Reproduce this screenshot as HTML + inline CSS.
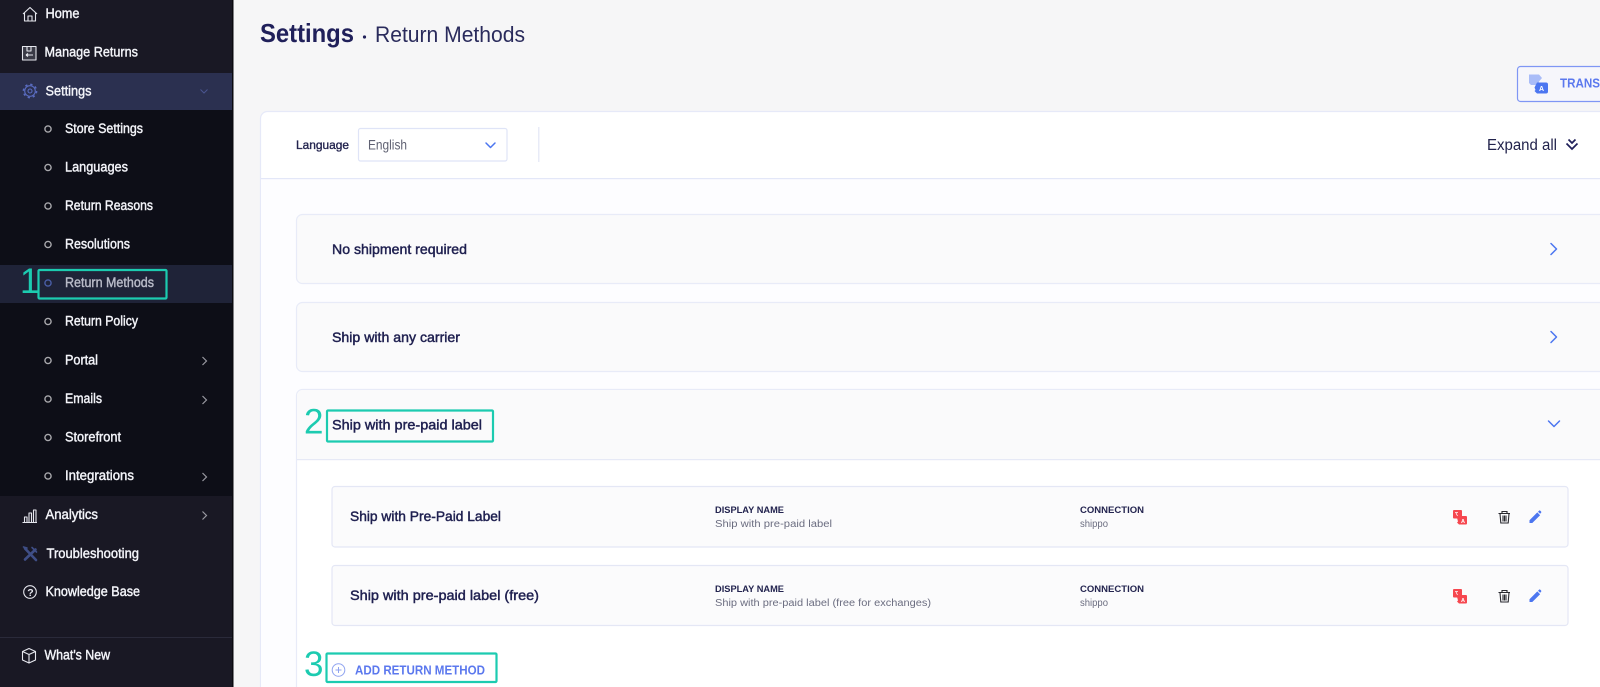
<!DOCTYPE html>
<html lang="en">
<head>
<meta charset="utf-8">
<title>Settings - Return Methods</title>
<style>
html,body{margin:0;padding:0;width:1600px;height:687px;overflow:hidden;background:#f6f6f7}
svg{display:block}
text{font-family:"Liberation Sans",sans-serif}
.n{font-size:13.5px;fill:#f4f5fa;stroke:#f4f5fa;stroke-width:.4}
.t{font-size:14px;fill:#1f2050;stroke:#1f2050;stroke-width:.45}
.l{font-size:9.5px;font-weight:bold;fill:#23244f}
.v{font-size:10px;fill:#6b6d80}
.c{fill:none;stroke:#4c76f0;stroke-width:1.5;stroke-linecap:round;stroke-linejoin:round}
.s{fill:none;stroke:#9a9aa2;stroke-width:1.2}
.b{fill:none;stroke:#a9a9ad;stroke-width:1.4}
.i{fill:none;stroke:#e6e7ee;stroke-width:1.1;stroke-linejoin:round}
.m{fill:none;stroke:#1ccbb0;stroke-width:2.2}
.d{font-size:35px;fill:#1ccbb0}
</style>
</head>
<body>
<svg width="1600" height="687" viewBox="0 0 1600 687" xmlns="http://www.w3.org/2000/svg">
<rect width="1600" height="687" fill="#f6f6f7"/>

<!-- Sidebar -->
<rect x="0" y="0" width="232" height="687" fill="#191824"/>
<rect x="232" y="0" width="1.5" height="687" fill="#0b0b10"/>
<rect x="0" y="110" width="232" height="386" fill="#0d0e17"/>
<rect x="0" y="73" width="232" height="37" fill="#2b3050"/>
<rect x="0" y="265" width="232" height="38" fill="#1f2338"/>
<rect x="0" y="637" width="232" height="1" fill="#2a2a3a"/>

<!-- Sidebar icons -->
<path class="i" d="M23 14 30 7.500 37 14M24.500 13V21H35.500V13M28 21V16H32V21"/>
<rect class="i" x="22.500" y="46.500" width="13.500" height="13.500" style="fill:#3a3a46"/>
<path class="i" d="M27 47V51H31V47M26 55H33M26 55l2-1.500M26 55l2 1.500"/>
<g fill="none" stroke="#5a6cc0">
<circle cx="30" cy="91" r="2" stroke-width="1.100"/>
<circle cx="30" cy="91" r="5.300" stroke-width="1.100"/>
<circle cx="30" cy="91" r="6.600" stroke-width="1.500" stroke-dasharray="2.300 2.880"/>
</g>
<path class="i" d="M22.500 522.500H37M24.500 522V517H27V522M29 522V513H31.500V522M33.500 522V510H36V522"/>
<g fill="none" stroke="#3f4e86" stroke-linecap="round">
<path d="M25 548.500 36 560" stroke-width="2.600"/>
<path d="M35.500 549.500 25 559.500" stroke-width="2.600"/>
<path d="M32 547.500l4.500 4.500M23.500 547l3.500 1" stroke-width="1.600"/>
</g>
<circle class="i" cx="30" cy="592" r="6.300" stroke-width="1.400"/>
<text x="27.300" y="596" font-size="10.500" font-weight="bold" fill="#e6e7ee">?</text>
<path class="i" d="M29 648.500 35.500 651.500V660L29 663 22.500 660V651.500ZM22.500 651.500 29 654.500 35.500 651.500M29 654.500V663"/>

<!-- Sidebar text -->
<text class="n" x="45.500" y="18" textLength="34" lengthAdjust="spacingAndGlyphs">Home</text>
<text class="n" x="44.500" y="56.500" textLength="93.500" lengthAdjust="spacingAndGlyphs">Manage Returns</text>
<text class="n" x="45.500" y="95.500" textLength="46" lengthAdjust="spacingAndGlyphs">Settings</text>
<text class="n" x="65" y="133" textLength="78" lengthAdjust="spacingAndGlyphs">Store Settings</text>
<text class="n" x="65" y="171.500" textLength="63" lengthAdjust="spacingAndGlyphs">Languages</text>
<text class="n" x="65" y="210" textLength="88" lengthAdjust="spacingAndGlyphs">Return Reasons</text>
<text class="n" x="65" y="248.500" textLength="65" lengthAdjust="spacingAndGlyphs">Resolutions</text>
<text class="n" x="65" y="287" textLength="89" lengthAdjust="spacingAndGlyphs" style="fill:#b9bbc8;stroke:#b9bbc8">Return Methods</text>
<text class="n" x="65" y="325.500" textLength="73" lengthAdjust="spacingAndGlyphs">Return Policy</text>
<text class="n" x="65" y="364.500" textLength="33" lengthAdjust="spacingAndGlyphs">Portal</text>
<text class="n" x="65" y="403" textLength="37" lengthAdjust="spacingAndGlyphs">Emails</text>
<text class="n" x="65" y="441.500" textLength="56" lengthAdjust="spacingAndGlyphs">Storefront</text>
<text class="n" x="65" y="480" textLength="69" lengthAdjust="spacingAndGlyphs">Integrations</text>
<text class="n" x="45.500" y="519" textLength="52.500" lengthAdjust="spacingAndGlyphs">Analytics</text>
<text class="n" x="46.500" y="558" textLength="92.500" lengthAdjust="spacingAndGlyphs">Troubleshooting</text>
<text class="n" x="45.500" y="596" textLength="94.500" lengthAdjust="spacingAndGlyphs">Knowledge Base</text>
<text class="n" x="44.500" y="659.500" textLength="65.500" lengthAdjust="spacingAndGlyphs">What's New</text>

<!-- Bullets -->
<circle class="b" cx="48" cy="129" r="3.100"/>
<circle class="b" cx="48" cy="167.500" r="3.100"/>
<circle class="b" cx="48" cy="206" r="3.100"/>
<circle class="b" cx="48" cy="244.500" r="3.100"/>
<circle class="b" cx="48" cy="283" r="3.100" style="stroke:#4a5ea8"/>
<circle class="b" cx="48" cy="321.500" r="3.100"/>
<circle class="b" cx="48" cy="360.500" r="3.100"/>
<circle class="b" cx="48" cy="399" r="3.100"/>
<circle class="b" cx="48" cy="437.500" r="3.100"/>
<circle class="b" cx="48" cy="476" r="3.100"/>

<!-- Sidebar chevrons -->
<path d="M200.500 89.500 204 93 207.500 89.500" fill="none" stroke="#4a5590" stroke-width="1"/>
<path class="s" d="M202.500 357 206.500 361 202.500 365"/>
<path class="s" d="M202.500 396 206.500 400 202.500 404"/>
<path class="s" d="M202.500 473 206.500 477 202.500 481"/>
<path class="s" d="M202.500 511.500 206.500 515.500 202.500 519.500"/>

<!-- Title -->
<text x="260" y="42" font-size="26" font-weight="bold" fill="#20205a" textLength="94" lengthAdjust="spacingAndGlyphs">Settings</text>
<circle cx="364.500" cy="37" r="1.600" fill="#20205a"/>
<text x="375" y="42" font-size="22" fill="#2a2b5c" textLength="150" lengthAdjust="spacingAndGlyphs">Return Methods</text>

<!-- Translate button -->
<path d="M1600 66.500H1520.500a3 3 0 0 0-3 3v29a3 3 0 0 0 3 3H1600" fill="#f6f6fb" stroke="#7f96f4" stroke-width="1.200"/>
<path d="M1529 74.500h10l3 3.500-3 3.500v3.500h-8l-2-2z" fill="#a9bcf8"/>
<path d="M1537 82.500h9a2 2 0 0 1 2 2v7a2 2 0 0 1-2 2h-9l-2.500-2.500 1-1-1-2.500z" fill="#4c76f0"/>
<text x="1539" y="91" font-size="7" font-weight="bold" fill="#fff">A</text>
<text x="1560" y="87.500" font-size="13" font-weight="bold" fill="#5b78ee" textLength="40" lengthAdjust="spacingAndGlyphs">TRANS</text>

<!-- Main card -->
<path d="M1600 111.500H267.500a7 7 0 0 0-7 7V687H1600Z" fill="#fff"/>
<path d="M1600 111.500H267.500a7 7 0 0 0-7 7V687" fill="none" stroke="#e6e9f8" stroke-width="1.200"/>
<rect x="261" y="179" width="1339" height="508" fill="#fdfdff"/>
<rect x="261" y="178" width="1339" height="1.200" fill="#e3e7f8"/>

<text x="296" y="149" font-size="12" fill="#23244f" stroke="#23244f" stroke-width=".35" textLength="53" lengthAdjust="spacingAndGlyphs">Language</text>
<rect x="358.500" y="128.500" width="148.500" height="32.500" rx="2" fill="#fff" stroke="#dfe4f7" stroke-width="1.200"/>
<text x="368" y="149.500" font-size="13.500" fill="#5f6172" textLength="39" lengthAdjust="spacingAndGlyphs">English</text>
<path class="c" d="M486 143 490.500 147.500 495 143" stroke-width="2"/>
<rect x="538" y="127" width="1.500" height="35" fill="#e8ebf7"/>

<text x="1487" y="150" font-size="15.500" fill="#22234c" textLength="70" lengthAdjust="spacingAndGlyphs">Expand all</text>
<path d="M1568.500 139.500 1572 143 1575.500 139.500M1566.500 143.500 1572 149 1577.500 143.500" fill="none" stroke="#20205a" stroke-width="1.700"/>

<!-- Accordions -->
<path d="M1600 214.500H302.500a6 6 0 0 0-6 6V277.500a6 6 0 0 0 6 6H1600" fill="#fafafb" stroke="#e8ebf8" stroke-width="1.200"/>
<text class="t" x="332" y="254" textLength="135" lengthAdjust="spacingAndGlyphs">No shipment required</text>
<path class="c" d="M1551 243.500 1556.500 249 1551 254.500"/>

<path d="M1600 302.500H302.500a6 6 0 0 0-6 6V365.500a6 6 0 0 0 6 6H1600" fill="#fafafb" stroke="#e8ebf8" stroke-width="1.200"/>
<text class="t" x="332" y="342" textLength="128" lengthAdjust="spacingAndGlyphs">Ship with any carrier</text>
<path class="c" d="M1551 331.500 1556.500 337 1551 342.500"/>

<path d="M1600 389.500H302.500a6 6 0 0 0-6 6V687H1600Z" fill="#fff"/>
<path d="M1600 389.500H302.500a6 6 0 0 0-6 6V687" fill="none" stroke="#e8ebf8" stroke-width="1.200"/>
<path d="M297 459V395.500a5.500 5.500 0 0 1 5.500-5.500H1600V459Z" fill="#fafafb"/>
<rect x="297" y="459" width="1303" height="1.200" fill="#e6e9f6"/>
<text class="t" x="332" y="429.500" textLength="150" lengthAdjust="spacingAndGlyphs">Ship with pre-paid label</text>
<path class="c" d="M1548.500 421 1554 426.500 1559.500 421"/>

<!-- Inner rows -->
<rect x="332" y="486.500" width="1236" height="60.500" rx="3" fill="#fbfbfc" stroke="#e4e7f5" stroke-width="1.200"/>
<text class="t" x="350" y="521" textLength="151" lengthAdjust="spacingAndGlyphs">Ship with Pre-Paid Label</text>
<text class="l" x="715" y="513" textLength="69" lengthAdjust="spacingAndGlyphs">DISPLAY NAME</text>
<text class="v" x="715" y="527" textLength="117" lengthAdjust="spacingAndGlyphs">Ship with pre-paid label</text>
<text class="l" x="1080" y="513" textLength="64" lengthAdjust="spacingAndGlyphs">CONNECTION</text>
<text class="v" x="1080" y="527" textLength="28" lengthAdjust="spacingAndGlyphs">shippo</text>

<rect x="332" y="565.500" width="1236" height="60" rx="3" fill="#fbfbfc" stroke="#e4e7f5" stroke-width="1.200"/>
<text class="t" x="350" y="600" textLength="189" lengthAdjust="spacingAndGlyphs">Ship with pre-paid label (free)</text>
<text class="l" x="715" y="592" textLength="69" lengthAdjust="spacingAndGlyphs">DISPLAY NAME</text>
<text class="v" x="715" y="606" textLength="216" lengthAdjust="spacingAndGlyphs">Ship with pre-paid label (free for exchanges)</text>
<text class="l" x="1080" y="592" textLength="64" lengthAdjust="spacingAndGlyphs">CONNECTION</text>
<text class="v" x="1080" y="606" textLength="28" lengthAdjust="spacingAndGlyphs">shippo</text>

<!-- Row icons (row 1) -->
<g>
<rect x="1453" y="510" width="9" height="8.500" rx="1" fill="#f6474f"/>
<path d="M1459 516h7a1 1 0 0 1 1 1v6.500a1 1 0 0 1-1 1h-7l-2-2 1-1-.8-3z" fill="#f6474f"/>
<text x="1461" y="523" font-size="5.500" font-weight="bold" fill="#fff">A</text>
<path d="M1455 512.500h3M1456 513l1.500 3" stroke="#fff" stroke-width=".8" fill="none"/>
<path d="M1498.500 513.500h11.500M1502 513.500v-2h5v2M1500 513.500l.8 9.500h7.400l.8-9.500M1503 515.500v6M1504.500 515.500v6M1506 515.500v6" fill="none" stroke="#2a2a30" stroke-width="1.100"/>
<path d="M1529.500 523v-2.800l7.800-7.800 2.800 2.800-7.800 7.800zM1538 511.700l1-1a1 1 0 0 1 1.300 0l.8.800a1 1 0 0 1 0 1.300l-1 1z" fill="#4c76f0"/>
</g>
<!-- Row icons (row 2) -->
<g transform="translate(0 79)">
<rect x="1453" y="510" width="9" height="8.500" rx="1" fill="#f6474f"/>
<path d="M1459 516h7a1 1 0 0 1 1 1v6.500a1 1 0 0 1-1 1h-7l-2-2 1-1-.8-3z" fill="#f6474f"/>
<text x="1461" y="523" font-size="5.500" font-weight="bold" fill="#fff">A</text>
<path d="M1455 512.500h3M1456 513l1.500 3" stroke="#fff" stroke-width=".8" fill="none"/>
<path d="M1498.500 513.500h11.500M1502 513.500v-2h5v2M1500 513.500l.8 9.500h7.400l.8-9.500M1503 515.500v6M1504.500 515.500v6M1506 515.500v6" fill="none" stroke="#2a2a30" stroke-width="1.100"/>
<path d="M1529.500 523v-2.800l7.800-7.800 2.800 2.800-7.800 7.800zM1538 511.700l1-1a1 1 0 0 1 1.300 0l.8.800a1 1 0 0 1 0 1.300l-1 1z" fill="#4c76f0"/>
</g>

<!-- Add return method -->
<circle cx="338.500" cy="670" r="6.300" fill="none" stroke="#8fa3f0" stroke-width="1"/>
<path d="M335.500 670h6M338.500 667v6" stroke="#8fa3f0" stroke-width="1"/>
<text x="355" y="674.500" font-size="13" font-weight="bold" fill="#5b78ee" textLength="130" lengthAdjust="spacingAndGlyphs">ADD RETURN METHOD</text>

<!-- Annotations -->
<rect class="m" x="38.500" y="270" width="128" height="28.500" rx="1"/>
<text class="d" x="20" y="293">1</text>
<rect class="m" x="327" y="410.500" width="166" height="31" rx="1"/>
<text class="d" x="304" y="433.500">2</text>
<rect class="m" x="326.500" y="653.500" width="170" height="28.500" rx="1"/>
<text class="d" x="304" y="676">3</text>
</svg>
</body>
</html>
